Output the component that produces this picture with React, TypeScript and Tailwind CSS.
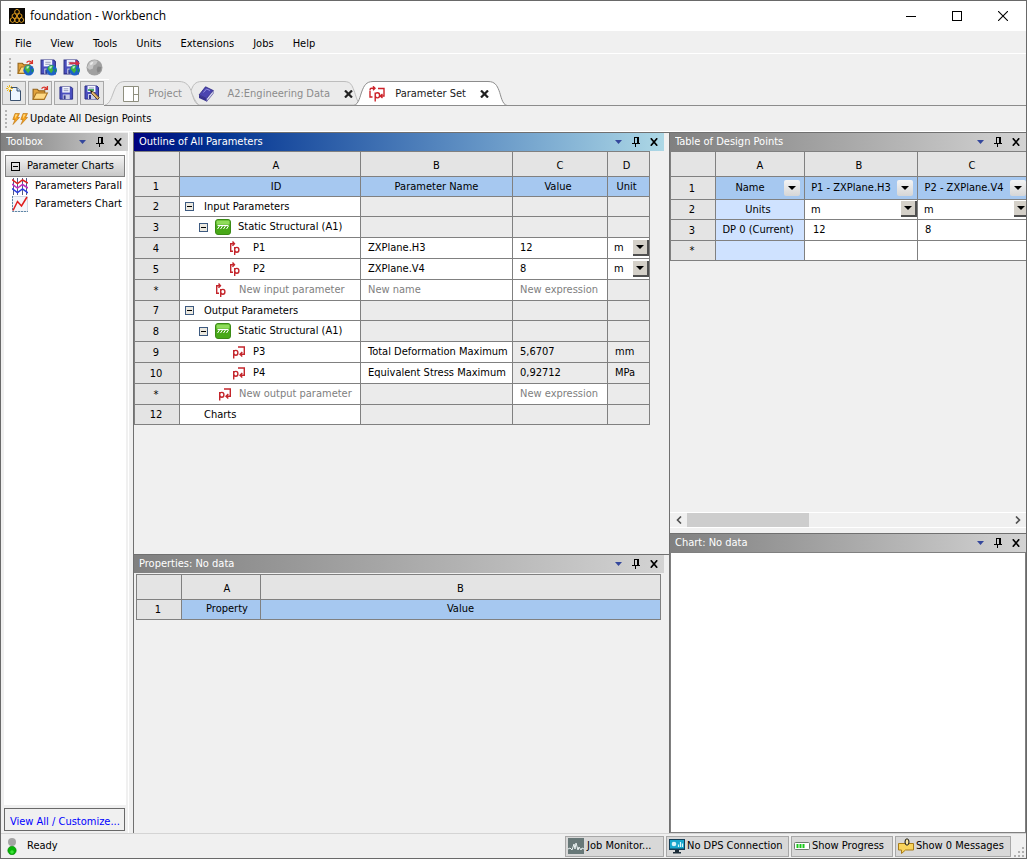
import type { ReactNode } from "react";
import { clsx } from "clsx";

/* ── Small glyphs ── */
function PinIcon() {
  return (
    <svg width="8" height="10" viewBox="0 0 8 10" fill="none" stroke="#000" shapeRendering="crispEdges">
      <path d="M2 .5h5M2.500 0v6M5.500 0v6M6.500 0v6M0 6.500h8M3.500 7v3" />
    </svg>
  );
}

function CloseIcon() {
  return (
    <svg width="8" height="8" viewBox="0 0 8 8" fill="none" stroke="#000" strokeWidth="1.700">
      <path d="M.8.3l6.400 7.400M7.200.3L.8 7.700" />
    </svg>
  );
}

function Caret({ large = false }: { large?: boolean }) {
  return (
    <svg width={large ? 8 : 7} height="4" viewBox="0 0 7 4" preserveAspectRatio="none" fill="currentColor">
      <path d="M0 0h7L3.500 4z" />
    </svg>
  );
}

function LogoIcon() {
  const cubes = [
    [8, 3.8],
    [5.4, 8],
    [10.6, 8],
    [3.6, 12],
    [8, 12.2],
    [12.4, 12],
  ];
  return (
    <svg width="16" height="16" viewBox="0 0 16 16">
      <path fill="#0a0805" d="M0 0h16v16H0z" />
      {cubes.map(([x, y]) => (
        <path
          key={`${x}-${y}`}
          transform={`translate(${x} ${y})`}
          d="M-2.200-1.200L0-2.500l2.200 1.300v2.400L0 2.500l-2.200-1.300z"
          fill="none"
          stroke="#dc9a1e"
        />
      ))}
    </svg>
  );
}

function Globe() {
  return (
    <g>
      <circle cx="11" cy="10.500" r="5" fill="#1c62c8" />
      <path d="M8.500 6.500c1.500-1 3.500-.8 4.500 0l-1.500 2 1 2-2 3-2-2.500-1.500-2z" fill="#41b53c" />
      <path d="M9 7l2.500-.4-.8 2-1.600.6z" fill="#b9f2d5" />
      <path d="M13.600 9.200l1.900.4-.3 2.300-1.400.7z" fill="#1f8f5a" />
    </g>
  );
}

function Floppy() {
  return (
    <g>
      <path d="M1 1h12l1.500 1.500V14H1z" fill="#4a4fbe" stroke="#2c2f86" />
      <path d="M3.500 1h8v6h-8z" fill="#f4f6ff" />
      <path d="M5 3h5M5 5h5" stroke="#8e98b8" />
      <path d="M4 9h7.500v5H4z" fill="#c9cce4" />
      <path d="M5 10h2v4H5z" fill="#34388c" />
    </g>
  );
}

function OpenFolder() {
  return (
    <g>
      <path d="M1 13.500V4h4l1.500 1.500H12V8" fill="#e3a33c" stroke="#93631c" />
      <path d="M1 13.500L4 7.500h10.500l-3 6z" fill="#ffd983" stroke="#a8721f" />
      <path d="M9 3.500c1.500-2 3.500-2 5 0M14.500 1v3h-3" fill="none" stroke="#d8332a" strokeWidth="1.200" />
    </g>
  );
}

function RepoOpenIcon() {
  return (
    <svg width="17" height="17" viewBox="0 0 16 16">
      <OpenFolder />
      <Globe />
    </svg>
  );
}

function RepoSaveIcon({ send = false }: { send?: boolean }) {
  return (
    <svg width="17" height="17" viewBox="0 0 16 16">
      <Floppy />
      {send && <path d="M6 3h6V1l4 3-4 3V5H6z" fill="#d03048" />}
      <Globe />
    </svg>
  );
}

function GrayGlobeIcon() {
  return (
    <svg width="17" height="17" viewBox="0 0 16 16">
      <circle cx="8" cy="8" r="7.500" fill="#a0a0a0" />
      <path d="M3 3.500c2-2.500 6-3 8-1.500L9.500 5 7 6l-.5 3L3.500 10 1 8z" fill="#c6c6c6" />
      <path d="M11 7l3.500.5-1 4-2.500 1.500-1-3z" fill="#868686" />
      <path d="M4 3.500l3-1-1 2.500-2 .8z" fill="#ececec" />
    </svg>
  );
}

function NewFileIcon() {
  return (
    <svg width="16" height="16" viewBox="0 0 16 16">
      <path d="M4.500 2.500h6.500l3.500 3.500v9.500h-10z" fill="#eef6ff" stroke="#39506e" />
      <path d="M11 2.500V6h3.500" fill="#c0dcf8" stroke="#39506e" />
      <path d="M3.500 0v7M0 3.500h7M1 1l5 5M6 1L1 6" stroke="#e8b41c" />
      <circle cx="3.500" cy="3.500" r="1.200" fill="#fffbe0" />
    </svg>
  );
}

function SaveAsIcon() {
  return (
    <svg width="16" height="16" viewBox="0 0 16 16">
      <Floppy />
      <path d="M4 5h6" stroke="#1aa04a" strokeWidth="1.500" />
      <path d="M6.500 5.500l1 3 6 6 1.800-1.800-6-6z" fill="#e2b36a" stroke="#4d3311" strokeWidth=".8" />
      <path d="M6.500 5.500l.8 2.200 1.300-1.300z" fill="#111" />
    </svg>
  );
}

function BookIcon() {
  return (
    <svg width="16" height="16" viewBox="0 0 16 16">
      <path d="M1 9L7.500.8 15.200 4.500 8.700 12.500z" fill="#4b45b0" stroke="#2c2780" strokeWidth=".8" />
      <path d="M1 9v3l7.700 3.600v-3z" fill="#37318f" />
      <path d="M8.700 12.500v3l6.500-8v-3z" fill="#d9d9ee" stroke="#37318f" strokeWidth=".6" />
      <path d="M5.500 6.500l3-3.500 3.500 1.500" fill="none" stroke="#938fe0" />
    </svg>
  );
}

function ParamIcon({ kind }: { kind: "in" | "out" | "set" }) {
  if (kind === "set") {
    return (
      <svg width="16" height="16" viewBox="0 0 16 16" fill="none" stroke="#cc2229" strokeWidth="1.400">
        <path d="M1 4.500V11h2.500M1 4c0-1 .5-1.700 1.500-1.700H5M4 .3l2 2-2 2M9 2.500h6V10h-3M13.500 8l-2.200 2 2.200 2" />
        <path d="M6.200 15.500V6.500M6.200 9c0-1.600 1-2.200 2.200-2.200s2.200.8 2.200 2.500-1 2.600-2.200 2.600-2.200-.8-2.200-2.600" />
      </svg>
    );
  }
  return (
    <svg width="14" height="14" viewBox="0 0 14 14" fill="none" stroke="#c4262c" strokeWidth="1.400">
      {kind === "in" ? (
        <>
          <path d="M5 10.200H2.700V2.700h3M4.500.5l2 2.200-2 2.200" />
          <path d="M6.700 14V6M6.700 8.500c0-1.600 1-2.100 2.200-2.100s2 .8 2 2.400-.8 2.500-2 2.500-2.200-.8-2.200-2.500" />
        </>
      ) : (
        <>
          <path d="M1.700 13.500V5M1.700 7.500c0-1.600 1-2.100 2.200-2.100s2 .8 2 2.400-.8 2.500-2 2.500-2.200-.8-2.200-2.500" />
          <path d="M6 2h6.300v7.300H8.500M10.300 7L8 9.300l2.300 2.200" />
        </>
      )}
    </svg>
  );
}

function StructuralIcon() {
  return (
    <svg width="16" height="16" viewBox="0 0 16 16">
      <rect x=".5" y=".5" width="15" height="15" rx="2.500" fill="#48a818" stroke="#3b8a16" />
      <path d="M1.500 2.500q0-1 1-1h11q1 0 1 1v3h-13z" fill="#8fdc5a" />
      <path d="M2.500 6.500h11" stroke="#fff" strokeWidth="1.200" />
      <path d="M2.500 10l2-3M5.500 10l2-3M8.500 10l2-3M11.500 10l2-3" stroke="#fff" />
    </svg>
  );
}

function ParallelIcon() {
  return (
    <svg width="16" height="17" viewBox="0 0 16 17" fill="none">
      <path d="M1.500 0v17M5.500 0v17M10.500 0v17M14.500 0v17" stroke="#404a7a" strokeWidth=".9" />
      <path d="M0 1.500l5.500 4 5-3.500L16 5" stroke="#e02020" strokeWidth="1.500" />
      <path d="M0 6l5.500 4 5-3.500L16 10" stroke="#c030c0" strokeWidth="1.500" />
      <path d="M0 10.500l5.500 4 5-3.500 5.500 4" stroke="#2a3ce0" strokeWidth="1.500" />
    </svg>
  );
}

function LineChartIcon() {
  return (
    <svg width="16" height="16" viewBox="0 0 16 16" fill="none">
      <path d="M.5.5h15v15H.5z" fill="#f4f6fa" stroke="#d3dae4" />
      <path d="M.5 0v15.500H16" stroke="#5f86a6" strokeDasharray="2 1" />
      <path d="M1 14.500L5.500 5.500l4 4.500L15 1" stroke="#e01c1c" strokeWidth="1.500" />
    </svg>
  );
}

function Bolt() {
  return (
    <svg width="8" height="12" viewBox="0 0 8 12">
      <path d="M3 .5h4.500L5.500 4.500h2L1 11.500l2-5H.8z" fill="#f6a21c" stroke="#b8700c" strokeWidth=".6" />
      <path d="M3.500 1.500h2L3 5.500z" fill="#ffe69a" />
    </svg>
  );
}

/* ── Panel chrome ── */
function PanelHeader({ title, active = false }: { title: string; active?: boolean }) {
  return (
    <div
      className={clsx(
        "flex h-[18px] shrink-0 items-center bg-linear-to-r pr-[6px] pl-[5px] text-white",
        active ? "from-[#00007f] to-[#add8e6]" : "from-[#808080] to-[#d3d3d3]",
      )}
    >
      <h2 className="flex-1 truncate">{title}</h2>
      <div className="flex items-center gap-[10px]">
        <button aria-label="Window position" className="text-[#34479c]">
          <Caret />
        </button>
        <button aria-label="Auto hide">
          <PinIcon />
        </button>
        <button aria-label="Close">
          <CloseIcon />
        </button>
      </div>
    </div>
  );
}

function Grip() {
  return (
    <svg width="3" height="18" viewBox="0 0 3 18">
      {[0, 4, 8, 12, 16].map((y) => (
        <path key={y} d={`M0 ${y}h2v2H0z`} fill="#b4b4b4" />
      ))}
    </svg>
  );
}

/* ── Grid cells ── */
const cell = "border-r border-b border-[#808080] p-0 font-normal";

function ColumnHead({ children, className }: { children?: ReactNode; className?: string }) {
  return (
    <th scope="col" className={clsx(cell, "bg-[#e4e4e4] pt-1", className)}>
      {children}
    </th>
  );
}

function RowHead({ children }: { children: ReactNode }) {
  return (
    <th scope="row" className={clsx(cell, "bg-[#e4e4e4] pt-px pr-[2px]")}>
      {children}
    </th>
  );
}

function UnitSelect({ label }: { label: string }) {
  return (
    <div className="relative h-[19px]">
      <select aria-label={label} defaultValue="m" className="h-full w-full appearance-none bg-white pl-[6px]">
        <option>m</option>
      </select>
      <span className="pointer-events-none absolute top-px right-0 flex h-4 w-4 items-center justify-center border-r-2 border-b-2 border-[#505050] bg-[#d4d0c8]">
        <Caret large />
      </span>
    </div>
  );
}

function Expander() {
  return (
    <button
      aria-label="Collapse"
      className="flex h-[9px] w-[9px] items-center justify-center border border-[#3d5a80] bg-[#ece9e0]"
    >
      <span className="h-px w-[5px] bg-black" />
    </button>
  );
}

interface OutlineRow {
  no: string;
  label: string;
  indent: string;
  height: string;
  gap?: string;
  expander?: boolean;
  icon?: "system" | "in" | "out";
  name?: string;
  value?: string;
  unit?: string;
  kind: "group" | "input" | "output" | "newInput" | "newOutput";
}

const outlineRows: OutlineRow[] = [
  { no: "2", label: "Input Parameters", indent: "pl-[5px]", height: "h-5", gap: "gap-[10px]", expander: true, kind: "group" },
  { no: "3", label: "Static Structural (A1)", indent: "pl-[19px]", height: "h-[21px]", gap: "gap-[7px]", expander: true, icon: "system", kind: "group" },
  { no: "4", label: "P1", indent: "pl-12", height: "h-[21px]", gap: "gap-[11px]", icon: "in", name: "ZXPlane.H3", value: "12", kind: "input" },
  { no: "5", label: "P2", indent: "pl-12", height: "h-[21px]", gap: "gap-[11px]", icon: "in", name: "ZXPlane.V4", value: "8", kind: "input" },
  { no: "*", label: "New input parameter", indent: "pl-[34px]", height: "h-[21px]", gap: "gap-[11px]", icon: "in", name: "New name", value: "New expression", kind: "newInput" },
  { no: "7", label: "Output Parameters", indent: "pl-[5px]", height: "h-5", gap: "gap-[10px]", expander: true, kind: "group" },
  { no: "8", label: "Static Structural (A1)", indent: "pl-[19px]", height: "h-[21px]", gap: "gap-[7px]", expander: true, icon: "system", kind: "group" },
  { no: "9", label: "P3", indent: "pl-[52px]", height: "h-[21px]", gap: "gap-[7px]", icon: "out", name: "Total Deformation Maximum", value: "5,6707", unit: "mm", kind: "output" },
  { no: "10", label: "P4", indent: "pl-[52px]", height: "h-[21px]", gap: "gap-[7px]", icon: "out", name: "Equivalent Stress Maximum", value: "0,92712", unit: "MPa", kind: "output" },
  { no: "*", label: "New output parameter", indent: "pl-[38px]", height: "h-[21px]", gap: "gap-[7px]", icon: "out", value: "New expression", kind: "newOutput" },
  { no: "12", label: "Charts", indent: "pl-6", height: "h-5", kind: "group" },
];

function OutlineTable() {
  return (
    <table className="w-[516px] table-fixed border-separate border-spacing-0 border-t border-l border-[#808080]">
      <colgroup>
        <col className="w-[45px]" />
        <col className="w-[181px]" />
        <col className="w-[152px]" />
        <col className="w-[95px]" />
        <col className="w-[42px]" />
      </colgroup>
      <thead>
        <tr className="h-[25px]">
          <ColumnHead />
          <ColumnHead className="pl-3">A</ColumnHead>
          <ColumnHead>B</ColumnHead>
          <ColumnHead>C</ColumnHead>
          <ColumnHead className="pr-1">D</ColumnHead>
        </tr>
        <tr className="h-5 bg-[#a6c8f0]">
          <RowHead>1</RowHead>
          <th className={clsx(cell, "pl-3")}>ID</th>
          <th className={cell}>Parameter Name</th>
          <th className={clsx(cell, "pr-1")}>Value</th>
          <th className={clsx(cell, "pr-1")}>Unit</th>
        </tr>
      </thead>
      <tbody>
        {outlineRows.map((row, i) => {
          const isNew = row.kind === "newInput" || row.kind === "newOutput";
          const editableName = row.kind !== "group" && row.kind !== "newOutput";
          const editableValue = row.kind === "input" || isNew;
          return (
            <tr key={i} className={row.height}>
              <RowHead>{row.no}</RowHead>
              <td className={clsx(cell, "bg-white", isNew && "text-[#808080]")}>
                <div className={clsx("flex items-center", row.indent, row.gap)}>
                  {row.expander && <Expander />}
                  {row.icon === "system" && <StructuralIcon />}
                  {(row.icon === "in" || row.icon === "out") && <ParamIcon kind={row.icon} />}
                  <span>{row.label}</span>
                </div>
              </td>
              <td className={clsx(cell, "pl-[7px]", editableName ? "bg-white" : "bg-[#ebebeb]", isNew && "text-[#808080]")}>
                {row.name}
              </td>
              <td className={clsx(cell, "pl-[7px]", editableValue ? "bg-white" : "bg-[#ebebeb]", isNew && "text-[#808080]")}>
                {row.value}
              </td>
              {row.kind === "input" ? (
                <td className={clsx(cell, "bg-white")}>
                  <UnitSelect label={`Unit of ${row.label}`} />
                </td>
              ) : (
                <td className={clsx(cell, "bg-[#ebebeb] pl-[7px]")}>{row.unit}</td>
              )}
            </tr>
          );
        })}
      </tbody>
    </table>
  );
}

function FilterCell({ label }: { label: string }) {
  return (
    <th className={cell}>
      <div className="flex items-center pr-1">
        <span className="flex-1 whitespace-nowrap">{label}</span>
        <button
          aria-label={`Filter ${label}`}
          className="flex h-4 w-4 shrink-0 items-center justify-center rounded-xs bg-linear-to-b from-[#f4f4f4] to-[#d6d6d6]"
        >
          <Caret large />
        </button>
      </div>
    </th>
  );
}

function DesignPointsTable() {
  return (
    <table className="w-[361px] table-fixed border-separate border-spacing-0 border-t border-l border-[#808080]">
      <colgroup>
        <col className="w-[45px]" />
        <col className="w-[89px]" />
        <col className="w-[113px]" />
        <col className="w-[113px]" />
      </colgroup>
      <thead>
        <tr className="h-[25px]">
          <ColumnHead />
          <ColumnHead>A</ColumnHead>
          <ColumnHead className="pr-1">B</ColumnHead>
          <ColumnHead className="pr-1">C</ColumnHead>
        </tr>
        <tr className="h-[23px] bg-[#a6c8f0]">
          <RowHead>1</RowHead>
          <FilterCell label="Name" />
          <FilterCell label="P1 - ZXPlane.H3" />
          <FilterCell label="P2 - ZXPlane.V4" />
        </tr>
      </thead>
      <tbody className="bg-white">
        <tr className="h-5">
          <RowHead>2</RowHead>
          <td className={clsx(cell, "bg-[#cfe2ff] pr-1 text-center")}>Units</td>
          <td className={cell}>
            <UnitSelect label="Unit of P1 design points" />
          </td>
          <td className={cell}>
            <UnitSelect label="Unit of P2 design points" />
          </td>
        </tr>
        <tr className="h-[21px]">
          <RowHead>3</RowHead>
          <td className={clsx(cell, "bg-[#cfe2ff] pr-1 text-center")}>DP 0 (Current)</td>
          <td className={clsx(cell, "pl-2")}>12</td>
          <td className={clsx(cell, "pl-[7px]")}>8</td>
        </tr>
        <tr className="h-5">
          <RowHead>*</RowHead>
          <td className={clsx(cell, "bg-[#cfe2ff]")} />
          <td className={cell} />
          <td className={cell} />
        </tr>
      </tbody>
    </table>
  );
}

function PropertiesTable() {
  return (
    <table className="w-full table-fixed border-separate border-spacing-0 border-t border-l border-[#808080]">
      <colgroup>
        <col className="w-[45px]" />
        <col className="w-[79px]" />
        <col />
      </colgroup>
      <thead>
        <tr className="h-[25px]">
          <ColumnHead />
          <ColumnHead className="pl-3">A</ColumnHead>
          <ColumnHead>B</ColumnHead>
        </tr>
        <tr className="h-5 bg-[#a6c8f0]">
          <RowHead>1</RowHead>
          <th className={clsx(cell, "pl-3")}>Property</th>
          <th className={cell}>Value</th>
        </tr>
      </thead>
    </table>
  );
}

/* ── Window chrome ── */
function TitleBar() {
  return (
    <header className="flex h-[30px] shrink-0 items-center bg-white pl-2">
      <LogoIcon />
      <h1 className="flex-1 pl-[5px] font-['Open_Sans','Noto_Sans',sans-serif] text-[12px]">foundation - Workbench</h1>
      <button aria-label="Minimize" className="flex h-full w-[46px] items-center justify-center">
        <span className="h-px w-[10px] bg-black" />
      </button>
      <button aria-label="Maximize" className="flex h-full w-[46px] items-center justify-center">
        <span className="h-[10px] w-[10px] border border-black" />
      </button>
      <button aria-label="Close window" className="flex h-full w-[46px] items-center justify-center">
        <svg width="10" height="10" viewBox="0 0 10 10" stroke="#000" strokeWidth="1.100">
          <path d="M0 0l10 10M10 0L0 10" />
        </svg>
      </button>
    </header>
  );
}

function MenuBar() {
  const items = ["File", "View", "Tools", "Units", "Extensions", "Jobs", "Help"];
  return (
    <nav className="flex h-[23px] shrink-0 items-center gap-[19px] border-b border-white pt-[3px] pl-[14px]">
      {items.map((item) => (
        <button key={item}>{item}</button>
      ))}
    </nav>
  );
}

function ToolButton({ label, children }: { label: string; children: ReactNode }) {
  return (
    <button
      aria-label={label}
      className="flex h-6 w-6 items-center justify-center border border-[#a8a8a8] bg-[#e6e6e6]"
    >
      {children}
    </button>
  );
}

interface TabProps {
  label: string;
  icon: ReactNode;
  width: string;
  spacing: string;
  shape: string;
  viewBox: string;
  active?: boolean;
  closable?: boolean;
}

function Tab({ label, icon, width, spacing, shape, viewBox, active, closable }: TabProps) {
  return (
    <div className={clsx("relative h-[25px] shrink-0", width, active ? "z-10 text-[#202020]" : "text-[#8c8c8c]")}>
      <svg viewBox={viewBox} className="absolute inset-0 h-full w-full">
        <path d={shape} fill={active ? "#fff" : "#ebebeb"} stroke={active ? "#8c8c8c" : "#bdbdbd"} />
      </svg>
      <div className={clsx("relative flex h-full items-center pt-[2px]", spacing)}>
        <button className="flex flex-1 items-center justify-between whitespace-nowrap">
          {icon}
          {label}
        </button>
        {closable && (
          <button aria-label={`Close ${label}`} className="ml-[14px]">
            <svg width="9" height="8" viewBox="0 0 9 8" stroke="#222" strokeWidth="2.200">
              <path d="M1 .5l7 7M8 .5l-7 7" />
            </svg>
          </button>
        )}
      </div>
    </div>
  );
}

function TabRow() {
  return (
    <div className="flex h-[26px] shrink-0 items-start">
      <div className="flex gap-[2px] pt-px pl-px">
        <ToolButton label="New">
          <NewFileIcon />
        </ToolButton>
        <ToolButton label="Open">
          <svg width="17" height="17" viewBox="0 0 16 16">
            <OpenFolder />
          </svg>
        </ToolButton>
        <ToolButton label="Save">
          <svg width="15" height="15" viewBox="0 0 16 16">
            <Floppy />
          </svg>
        </ToolButton>
        <ToolButton label="Save As">
          <SaveAsIcon />
        </ToolButton>
      </div>
      <div className="flex h-[26px] flex-1 items-end border-b border-[#8c8c8c] pl-px">
        <Tab
          label="Project"
          width="w-[94px]"
          spacing="pl-[18px] pr-[17px]"
          viewBox="0 0 94 25"
          shape="M0 25C5 24 7 16 9 11S13 1.500 20 1.500h54c7 0 10 4 12 9s3 13 8 14.500"
          icon={
            <svg width="16" height="16" viewBox="0 0 16 16" fill="#fff" stroke="#8f8f7f">
              <path d="M.5.5h15v15H.5zM10.500.5v15M10.500 8.500h5" />
            </svg>
          }
        />
        <div className="-ml-2 flex">
          <Tab
            label="A2:Engineering Data"
            width="w-[171px]"
            spacing="pl-[7px] pr-[9px]"
            viewBox="0 0 171 25"
            shape="M0 11C2 5 4 1.500 11 1.500h142c7 0 8 4 10 9s3 13 8 14.500H8C4 22 2 16 0 11"
            icon={<BookIcon />}
            closable
          />
        </div>
        <div className="-ml-2 flex">
          <Tab
            label="Parameter Set"
            width="w-[153px]"
            spacing="pl-[15px] pr-[18px]"
            viewBox="0 0 153 25"
            shape="M0 25.500C5 24 6 16 8 11S12 1.500 19 1.500h115c7 0 9 4 11 9s3 14 8 15"
            icon={<ParamIcon kind="set" />}
            active
            closable
          />
        </div>
      </div>
    </div>
  );
}

function Toolbox() {
  return (
    <aside className="flex min-h-0 flex-col pr-1">
      <div className="flex min-h-0 flex-1 flex-col border-r border-white">
        <div className="mt-px">
          <PanelHeader title="Toolbox" />
        </div>
        <div className="mr-[2px] ml-[3px] flex min-h-0 flex-1 flex-col overflow-hidden bg-white pt-1">
          <button className="mx-px flex h-[22px] shrink-0 items-center gap-[7px] border border-[#808080] bg-linear-to-b from-[#f4f4f4] to-[#c8c8c8] pl-[5px] whitespace-nowrap">
            <span className="flex h-[9px] w-[9px] items-center justify-center border border-black">
              <span className="h-px w-[5px] bg-black" />
            </span>
            Parameter Charts
          </button>
          <ul className="overflow-hidden pl-2 whitespace-nowrap">
            <li className="flex h-[18px] items-center gap-[7px]">
              <ParallelIcon />
              Parameters Parall
            </li>
            <li className="flex h-[18px] items-center gap-[7px]">
              <LineChartIcon />
              Parameters Chart
            </li>
          </ul>
        </div>
        <div className="px-[3px] pt-[3px] pb-[2px]">
          <a
            href="#customize"
            className="flex h-[23px] items-center border border-[#696969] pt-1 pl-[5px] whitespace-nowrap text-[#0000ff]"
          >
            View All / Customize...
          </a>
        </div>
      </div>
    </aside>
  );
}

function StatusButton({ icon, children, width }: { icon: ReactNode; children: string; width: string }) {
  return (
    <button
      className={clsx(
        "flex h-[21px] items-center gap-[2px] border border-[#a8a8a8] bg-[#d8d8d8] pl-[2px] whitespace-nowrap",
        width,
      )}
    >
      {icon}
      {children}
    </button>
  );
}

function StatusBar() {
  return (
    <footer className="flex h-[25px] shrink-0 items-center border-t border-[#d4d4d4]">
      <svg width="10" height="17" viewBox="0 0 10 17" className="ml-[6px]">
        <circle cx="5" cy="4" r="4" fill="#a4a4a4" />
        <circle cx="5" cy="12.500" r="4.200" fill="#06b406" stroke="#058205" strokeWidth=".6" />
        <circle cx="5" cy="14" r="1.800" fill="#3ee23a" />
      </svg>
      <span className="flex-1 pl-[10px]">Ready</span>
      <div className="flex gap-[2px]">
        <StatusButton
          width="w-[99px]"
          icon={
            <svg width="16" height="16" viewBox="0 0 16 16" className="mr-px">
              <path d="M0 0h16v16H0z" fill="#687878" />
              <path d="M0 11l2-1 2 2 2-6 1 5 1-6 2 7 1-3 2 3 1-2 2 1" fill="none" stroke="#e8f0f0" />
            </svg>
          }
        >
          Job Monitor...
        </StatusButton>
        <StatusButton
          width="w-[123px]"
          icon={
            <svg width="16" height="16" viewBox="0 0 16 16">
              <path d="M0 1h16v11H0z" fill="#143c55" />
              <path d="M1 2h14v8.500H1z" fill="#18a6cc" />
              <circle cx="5" cy="6" r="2.300" fill="#d8f4fa" />
              <path d="M9.500 9V6.500M11.500 9V4M13.500 9V5.500" stroke="#d8f4fa" strokeWidth="1.200" />
              <path d="M6 12h4v2h2v1.500H4V14h2z" fill="#1c2c38" />
            </svg>
          }
        >
          No DPS Connection
        </StatusButton>
        <StatusButton
          width="w-[102px]"
          icon={
            <svg width="16" height="16" viewBox="0 0 16 16">
              <rect x=".5" y="4.500" width="15" height="7" rx="1" fill="#fff" stroke="#6d7a6d" />
              <path d="M3.500 6v4M6.500 6v4M9.500 6v4" stroke="#18c818" strokeWidth="2" />
            </svg>
          }
        >
          Show Progress
        </StatusButton>
        <StatusButton
          width="w-[116px]"
          icon={
            <svg width="16" height="16" viewBox="0 0 16 16">
              <path d="M.5 5.500h15V12H7.500L3.500 15.500V12h-3z" fill="#f9d45c" stroke="#a87c18" />
              <ellipse cx="9" cy="4" rx="2" ry="3.200" fill="#f9e6a0" stroke="#111" />
            </svg>
          }
        >
          Show 0 Messages
        </StatusButton>
      </div>
      <svg width="12" height="12" viewBox="0 0 12 12" className="mr-px ml-[2px] self-end" fill="#b0b0b0">
        <path d="M9 1h2v2H9zM9 5h2v2H9zM9 9h2v2H9zM5 5h2v2H5zM5 9h2v2H5zM1 9h2v2H1z" />
      </svg>
    </footer>
  );
}

export default function App() {
  return (
    <div className="flex h-screen min-h-[600px] flex-col overflow-hidden border border-[#696969] bg-[#f0f0f0] font-['DejaVu_Sans_Condensed','DejaVu_Sans',sans-serif] text-[11px] leading-[14px] text-black">
      <TitleBar />
      <MenuBar />
      <div className="flex h-[26px] w-[108px] shrink-0 items-center gap-[5px] border-b border-white pt-px pl-2">
        <Grip />
        <div className="flex gap-[6px]">
          <button aria-label="Open from repository">
            <RepoOpenIcon />
          </button>
          <button aria-label="Save to repository">
            <RepoSaveIcon />
          </button>
          <button aria-label="Send changes to repository">
            <RepoSaveIcon send />
          </button>
          <button aria-label="Repository connection">
            <GrayGlobeIcon />
          </button>
        </div>
      </div>
      <TabRow />
      <div className="flex h-[25px] shrink-0 items-center pl-1">
        <Grip />
        <button className="flex items-center pl-1">
          <Bolt />
          <Bolt />
          <span className="pl-[2px]">Update All Design Points</span>
        </button>
      </div>
      <main className="grid min-h-0 flex-1 grid-cols-[132px_minmax(0,536fr)_minmax(0,357fr)] grid-rows-1 border-t border-white">
        <Toolbox />
        <div className="flex min-h-0 flex-col border-l border-[#707070]">
          <section className="flex min-h-0 flex-[422] flex-col border-t border-[#707070] pr-[5px]">
            <PanelHeader title="Outline of All Parameters" active />
            <OutlineTable />
          </section>
          <section className="flex min-h-0 flex-[279] flex-col border-t border-[#707070] pr-[5px]">
            <PanelHeader title="Properties: No data" />
            <div className="pt-px pr-[3px] pl-[2px]">
              <PropertiesTable />
            </div>
          </section>
        </div>
        <div className="flex min-h-0 min-w-0 flex-col border-l border-[#707070]">
          <section className="flex min-h-0 flex-[401] flex-col border-t border-[#707070]">
            <PanelHeader title="Table of Design Points" />
            <div className="flex-1 overflow-hidden">
              <DesignPointsTable />
            </div>
            <div className="mb-[5px] flex h-4 items-stretch border-y border-white">
              <button aria-label="Scroll left" className="flex w-[17px] items-center justify-center">
                <svg width="6" height="8" viewBox="0 0 6 8" fill="none" stroke="#505050" strokeWidth="1.600">
                  <path d="M5 .5L1.500 4 5 7.500" />
                </svg>
              </button>
              <div className="flex-1">
                <div className="h-full w-[122px] bg-[#cdcdcd]" />
              </div>
              <button aria-label="Scroll right" className="flex w-[17px] items-center justify-center">
                <svg width="6" height="8" viewBox="0 0 6 8" fill="none" stroke="#505050" strokeWidth="1.600">
                  <path d="M1 .5L4.500 4 1 7.500" />
                </svg>
              </button>
            </div>
          </section>
          <section className="flex min-h-0 flex-[300] flex-col border-t border-[#707070]">
            <PanelHeader title="Chart: No data" />
            <div className="flex-1 border border-[#808080] bg-white" />
          </section>
        </div>
      </main>
      <StatusBar />
    </div>
  );
}
